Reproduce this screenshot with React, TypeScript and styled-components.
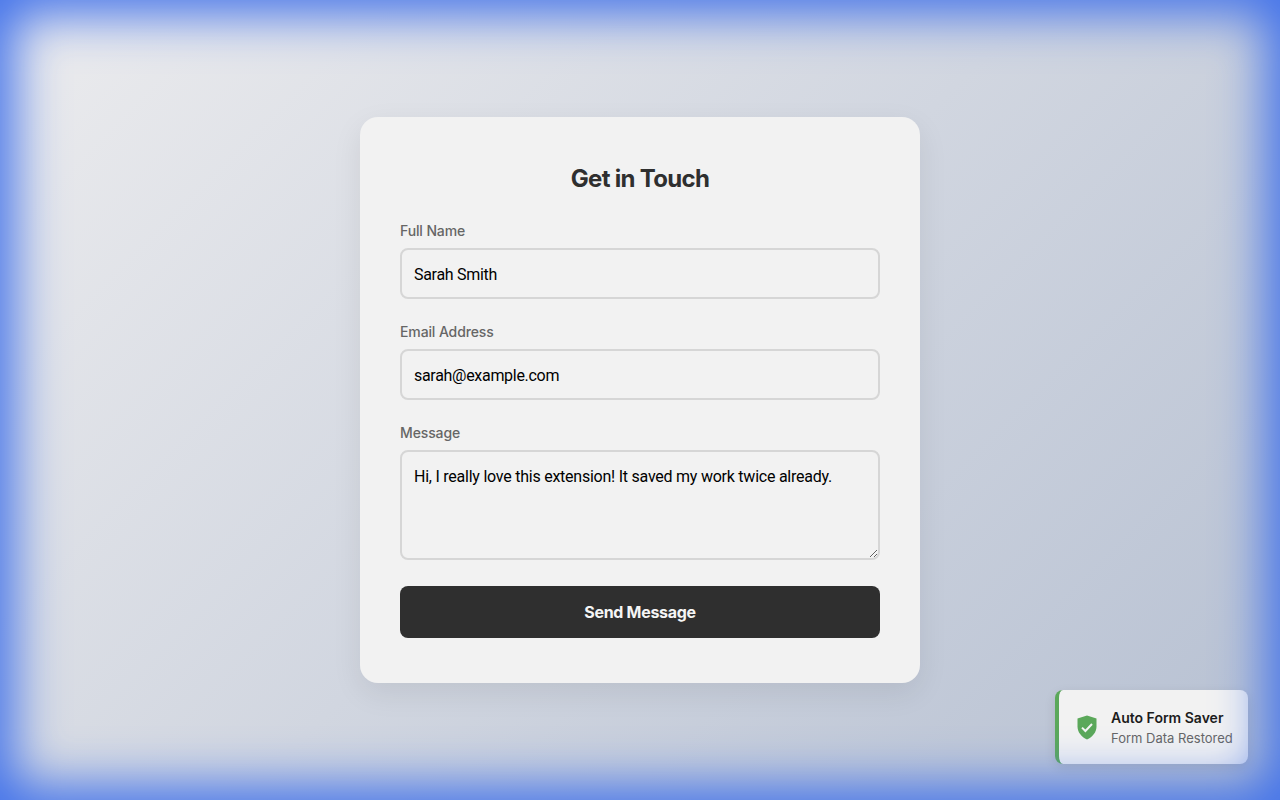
import React from 'react';
import styled, { createGlobalStyle } from 'styled-components';

const GlobalStyle = createGlobalStyle`
  html, body {
    margin: 0;
    height: 100%;
  }
  body {
    font-family: Inter, "Liberation Sans", sans-serif;
  }
  * {
    box-sizing: border-box;
  }
`;

const Page = styled.div`
  position: relative;
  height: 800px;
  overflow: hidden;
  display: flex;
  align-items: center;
  justify-content: center;
  background: linear-gradient(135deg, #ececee 0%, #b6c0d2 100%);
`;

const Glow = styled.div`
  position: absolute;
  inset: 0;
  z-index: 3;
  pointer-events: none;
  box-shadow: inset 0 0 50px 14px #4272ea;
`;

const Card = styled.form`
  width: 560px;
  height: 566px;
  padding: 40px;
  background: #f2f2f2;
  border-radius: 18px;
  box-shadow: 0 10px 30px rgba(0, 0, 0, 0.08);
`;

const Title = styled.h2`
  margin: 0 0 24px;
  height: 41px;
  line-height: 43px;
  font-size: 24px;
  font-weight: 700;
  letter-spacing: -0.7px;
  text-align: center;
  color: #2f2f2f;
`;

const Field = styled.div`
  display: flex;
  flex-direction: column;
  margin-bottom: 24px;
`;

const Label = styled.label`
  height: 17px;
  line-height: 17px;
  margin-bottom: 9px;
  font-size: 14px;
  font-weight: 500;
  letter-spacing: -0.12px;
  color: #666;
`;

const TextInput = styled.input`
  height: 51px;
  padding: 2px 12px 0;
  font: 16px Roboto, "Liberation Sans", sans-serif;
  letter-spacing: -0.3px;
  color: #000;
  background: #f2f2f2;
  border: 2px solid #d6d6d6;
  border-radius: 8px;
  outline: none;
`;

const TextArea = styled.textarea`
  height: 110px;
  padding: 14px 12px 12px;
  font: 16px/1.4 Roboto, "Liberation Sans", sans-serif;
  letter-spacing: -0.24px;
  color: #000;
  background: #f2f2f2;
  border: 2px solid #d6d6d6;
  border-radius: 8px;
  outline: none;
  resize: vertical;
`;

const SendButton = styled.button`
  display: block;
  width: 100%;
  height: 52px;
  margin-top: 26px;
  font: 700 16px Inter, "Liberation Sans", sans-serif;
  letter-spacing: -0.3px;
  color: #f5f5f5;
  background: #2f2f2f;
  border: none;
  border-radius: 8px;
`;

const Toast = styled.div`
  position: absolute;
  right: 32px;
  bottom: 36px;
  z-index: 2;
  width: 193px;
  height: 74px;
  display: flex;
  align-items: center;
  gap: 14px;
  padding-left: 18px;
  background: #f2f2f2;
  border-left: 4px solid #5ba85a;
  border-radius: 8px;
  box-shadow: 0 4px 12px rgba(0, 0, 0, 0.1);
`;

const ToastText = styled.div`
  display: flex;
  flex-direction: column;
  gap: 4px;
`;

const ToastTitle = styled.div`
  font-size: 14px;
  line-height: 17px;
  font-weight: 600;
  color: #1c1c1c;
`;

const ToastSub = styled.div`
  font-size: 13px;
  line-height: 16px;
  color: #666;
`;

const ShieldIcon = () => (
  <svg width="20" height="25" viewBox="0 0 20 25">
    <path
      d="M10 0.5 L19.5 3.6 V11.5 C19.5 17.2 15.6 21.8 10 24.5 C4.4 21.8 0.5 17.2 0.5 11.5 V3.6 Z"
      fill="#5ba85a"
    />
    <path
      d="M5 12.6 L8.4 16 L15 9"
      fill="none"
      stroke="#f5f5f5"
      strokeWidth="2"
    />
  </svg>
);

const App = () => (
  <Page>
    <GlobalStyle />
    <Card>
      <Title>Get in Touch</Title>
      <Field>
        <Label>Full Name</Label>
        <TextInput defaultValue="Sarah Smith" />
      </Field>
      <Field>
        <Label>Email Address</Label>
        <TextInput defaultValue="sarah@example.com" />
      </Field>
      <Field>
        <Label>Message</Label>
        <TextArea defaultValue="Hi, I really love this extension! It saved my work twice already." />
      </Field>
      <SendButton type="button">Send Message</SendButton>
    </Card>
    <Toast>
      <ShieldIcon />
      <ToastText>
        <ToastTitle>Auto Form Saver</ToastTitle>
        <ToastSub>Form Data Restored</ToastSub>
      </ToastText>
    </Toast>
    <Glow />
  </Page>
);

export default App;
